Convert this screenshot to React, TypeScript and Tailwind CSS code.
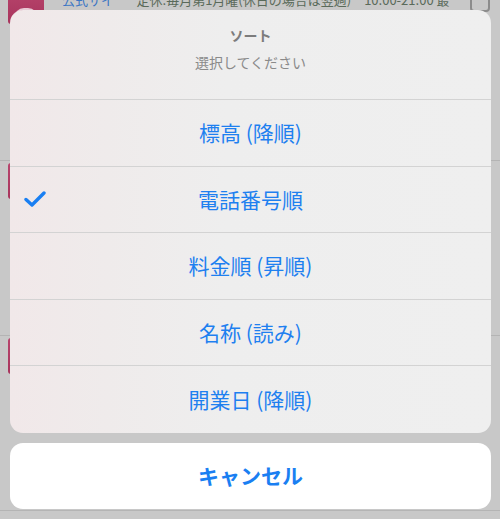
import React from "react";

const font = { fontFamily: '"Noto Sans CJK JP", "Noto Sans", sans-serif' };

function BgRow({ first }: { first?: boolean }) {
  return (
    <div className="flex h-[175px] border-b border-[#b4b4b4] px-[8px] pt-[2px] gap-[10px]">
      <div className="w-[36px] h-[36px] rounded-[3px] bg-gradient-to-b from-[#b8456d] to-[#a8345c] flex items-end justify-center shrink-0">
        <div className="w-[24px] h-[12px] border-t-2 border-x-2 border-[#e8c8d4] rounded-t-[10px] mb-[4px]" />
      </div>
      <div className="flex-1 flex gap-[10px] pt-[4px] text-[13px] leading-[16px]">
        {first && (
          <>
            <span className="text-[#3a75c4] pl-[8px]">公式サイト</span>
            <span className="text-[#5a6a5a]">
              定休:毎月第1月曜(休日の場合は翌週)　10:00-21:00 最終
              <br />
              20:30
            </span>
          </>
        )}
      </div>
      <div className="w-[22px] flex flex-col pt-[4px]">
        <div className="w-[20px] h-[20px] border-2 border-[#8c8c8c] rounded-[4px]" />
      </div>
    </div>
  );
}

function Check() {
  return (
    <svg width="22" height="16" viewBox="0 0 22 16" className="shrink-0">
      <path d="M2 8.5 L8 14 L20 2" stroke="#1a7ff2" strokeWidth="3.4" fill="none" strokeLinecap="round" strokeLinejoin="round" />
    </svg>
  );
}

export default function App() {
  const items = ["標高 (降順)", "電話番号順", "料金順 (昇順)", "名称 (読み)", "開業日 (降順)"];
  return (
    <div className="relative w-[500px] h-[519px] overflow-hidden bg-[#c8c8c8]" style={font}>
      <div className="-mt-[14px] flex flex-col">
        <BgRow first />
        <BgRow />
        <BgRow />
      </div>
      <div className="absolute left-[10px] top-[10px] w-[481px] flex flex-col gap-[10px]">
        <div className="rounded-[13px] overflow-hidden bg-[linear-gradient(90deg,#f1e8e9_0%,#efebeb_20%,#eeeeee_45%,#efefef_100%)]">
          <div className="h-[90px] flex flex-col items-center pt-[16px] gap-[9px] border-b border-[#d3d3d3]">
            <div className="text-[14px] leading-[18px] font-bold text-[#7c7c7c]">ソート</div>
            <div className="text-[14px] leading-[18px] text-[#8a8a8a]">選択してください</div>
          </div>
          {items.map((t, i) => (
            <div
              key={t}
              className={`relative h-[66.6px] flex items-center justify-center text-[21px] text-[#1e80f0] ${i < items.length - 1 ? "border-b border-[#d3d3d3]" : ""}`}
            >
              {i === 1 && (
                <div className="absolute left-[14px] top-[24px]">
                  <Check />
                </div>
              )}
              <span>{t}</span>
            </div>
          ))}
        </div>
        <div className="h-[66px] rounded-[13px] bg-white flex items-center justify-center text-[21px] font-bold text-[#1a7ff2]">
          キャンセル
        </div>
      </div>
    </div>
  );
}
